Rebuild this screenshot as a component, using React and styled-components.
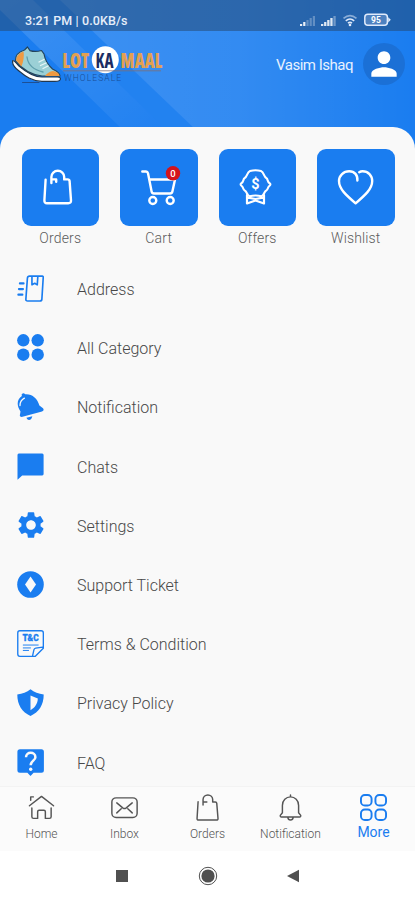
import React from 'react';
import styled, { createGlobalStyle } from 'styled-components';
import { MdSettings, MdPerson } from 'react-icons/md';

const BLUE = '#1a7df0';

const GlobalStyle = createGlobalStyle`
  * {
    box-sizing: border-box;
  }
  body {
    margin: 0;
    background: #fff;
    font-family: Roboto, "Noto Sans", sans-serif;
  }
`;

const Screen = styled.div`
  position: relative;
  width: 415px;
  height: 900px;
  display: flex;
  flex-direction: column;
  overflow: hidden;
  background: ${BLUE};
`;

const Rays = styled.svg`
  position: absolute;
  top: 0;
  left: 0;
`;

const StatusBar = styled.div`
  position: relative;
  height: 31px;
  flex: none;
  display: flex;
  align-items: center;
  justify-content: space-between;
  padding: 9px 24px 0 25px;
  background: rgba(38, 70, 110, 0.52);
  color: #e6eefa;
`;

const Clock = styled.span`
  font-size: 12.5px;
  font-weight: 500;
  letter-spacing: 0.1px;
  white-space: nowrap;
`;

const Header = styled.header`
  position: relative;
  height: 96px;
  flex: none;
  display: flex;
  align-items: flex-start;
  justify-content: space-between;
  padding: 12px 10px 0 12px;
`;

const Logo = styled.svg`
  display: block;
`;

const User = styled.div`
  display: flex;
  align-items: center;
  gap: 10px;
  color: #e8f1fe;
  font-size: 15px;
  white-space: nowrap;
`;

const UserName = styled.span`
  letter-spacing: -0.5px;
  padding-top: 2px;
`;

const Avatar = styled.div`
  width: 42px;
  height: 42px;
  border-radius: 50%;
  background: #1b70d6;
  display: flex;
  align-items: center;
  justify-content: center;
  color: #fff;
`;

const Panel = styled.main`
  position: relative;
  flex: 1;
  min-height: 0;
  overflow: hidden;
  padding: 22px 20.5px 0 21.5px;
  border-radius: 22px 22px 0 0;
  background: #f9f9f9;
`;

const Shortcuts = styled.div`
  display: flex;
  justify-content: space-between;
`;

const Shortcut = styled.div`
  width: 77.5px;
  display: flex;
  flex-direction: column;
  align-items: center;
  gap: 3px;
  color: #5c5c5c;
  font-size: 14px;
  font-weight: 300;
  line-height: 18px;
  letter-spacing: 0.15px;
`;

const Tile = styled.div`
  width: 77.5px;
  height: 77px;
  border-radius: 9px;
  background: ${BLUE};
  display: flex;
  align-items: center;
  justify-content: center;
`;

const Menu = styled.ul`
  list-style: none;
  margin: 12px -4.5px 0;
  padding: 0;
`;

const MenuItem = styled.li`
  height: 59.2px;
  display: flex;
  align-items: center;
  gap: 33px;
  color: #484848;
  font-size: 16px;
  font-weight: 300;
`;

const MenuLabel = styled.span`
  padding-top: 2px;
`;

const MenuIcon = styled.span`
  width: 27px;
  height: 27px;
  flex: none;
  display: flex;
  align-items: center;
  justify-content: center;
  color: ${BLUE};
`;

const TabBar = styled.nav`
  position: relative;
  height: 65px;
  flex: none;
  display: grid;
  grid-template-columns: repeat(5, 1fr);
  background: #fbfbfb;
  border-top: 1px solid #f3f3f3;
`;

const Tab = styled.div`
  display: flex;
  flex-direction: column;
  align-items: center;
  gap: ${({ $active }) => ($active ? 3 : 5)}px;
  padding-top: 7px;
  color: ${({ $active }) => ($active ? BLUE : '#555')};
  font-size: ${({ $active }) => ($active ? 14 : 12)}px;
  line-height: 17px;
  font-weight: ${({ $active }) => ($active ? 400 : 300)};
`;

const SystemBar = styled.div`
  height: 49px;
  flex: none;
  display: flex;
  align-items: center;
  justify-content: center;
  background: #fff;
`;

const Line = ({ size = 27, width = 1.5, box = 28, children }) => (
  <svg
    width={size}
    height={size}
    viewBox={`0 0 ${box} ${box}`}
    fill="none"
    stroke="currentColor"
    strokeWidth={width}
    strokeLinecap="round"
    strokeLinejoin="round"
  >
    {children}
  </svg>
);

const TileIcon = ({ children }) => (
  <svg
    width="77"
    height="77"
    viewBox="0 0 77 77"
    fill="none"
    stroke="#fff"
    strokeWidth="2.4"
    strokeLinecap="round"
    strokeLinejoin="round"
  >
    {children}
  </svg>
);

const shortcuts = [
  {
    label: 'Orders',
    icon: (
      <path d="M23.6 30.8 L22.4 51.3 Q22.2 54.3 25 54.3 H46.3 Q49.2 54.3 49 51.3 L47.6 32.2 Q47.4 30.4 45.6 30.4 H42.2 V28 A6.4 6.2 0 0 0 29.4 28 V34 M29.4 30.4 H34.2 V32.8" />
    ),
  },
  {
    label: 'Cart',
    icon: (
      <>
        <path d="M22.3 22.5 H26 Q27.6 22.5 28 24.2 L31.6 42.4 Q32 44.5 34 44.5 H50 Q52 44.5 52.4 42.5 L55 30.5 H29.4" />
        <circle cx="32.8" cy="51.5" r="3.5" />
        <circle cx="50.2" cy="51.5" r="3.5" />
        <circle cx="53" cy="24.3" r="7.2" fill="#d4141b" stroke="none" />
        <text x="53" y="27.6" textAnchor="middle" fontSize="9.5" fontWeight="500" fill="#fff" stroke="none">0</text>
      </>
    ),
  },
  {
    label: 'Offers',
    icon: (
      <>
        <path d="M28 46 V54.5 L36.5 51.5 L45 54.5 V46 M29 48.6 L36.5 50 L44 48.6" strokeWidth="2.2" />
        <path
          fill={BLUE}
          strokeWidth="2.1"
          d="M31 22 Q36.5 20.6 42 22 C45 23 44.6 27.4 47.4 29.2 C49.4 30.6 47.6 32.2 51 34.6 C51.6 35.2 51.4 36 50.8 36.5 C48 38.6 49.6 40 47.4 41.4 C44.6 43 45.2 46.6 42.4 47.2 Q36.5 45.8 30.6 47.2 C27.8 46.6 28.4 43 25.6 41.4 C23.4 40 25 38.6 22.2 36.5 C21.6 36 21.4 35.2 22 34.6 C25.4 32.2 23.6 30.6 25.6 29.2 C28.4 27.4 28 23 31 22 Z"
        />
        <text x="36.5" y="39.8" textAnchor="middle" fontSize="14.5" fontWeight="700" fill="#fff" stroke="none">$</text>
      </>
    ),
  },
  {
    label: 'Wishlist',
    icon: (
      <path d="M40.4 31.5 C40.8 26 37.6 22.3 32.2 22.3 C26.6 22.3 22 26.5 22 32 C22 40 29.2 46.2 38.6 54.3 C48 46.2 55.2 40 55.2 32 C55.2 26.5 51.2 22.3 45.6 22.3 Q43.6 22.3 42.2 23.2" />
    ),
  },
];

const menu = [
  {
    label: 'Address',
    icon: (
      <Line width={1.7}>
        <path d="M13 1.2 H26.2 Q27.3 1.2 27.2 2.6 L25.8 25 Q25.7 27 23.8 27 H11 Q9 27 9.2 25 L10.8 3.2 Q11 1.2 13 1.2 Z M15.5 1.5 V10.2 L18.4 8.6 L21 10.2 L21.6 1.5" />
        <path d="M3 8.7 H6.8 M2 14.6 H6.2 M1.4 20.4 H5.6" strokeWidth="2.2" />
      </Line>
    ),
  },
  {
    label: 'All Category',
    icon: (
      <svg width="27" height="27" viewBox="0 0 27 27" fill="currentColor">
        <circle cx="6.3" cy="6.3" r="6.2" />
        <circle cx="20.7" cy="6.3" r="6.2" />
        <circle cx="6.3" cy="20.7" r="6.2" />
        <circle cx="20.7" cy="20.7" r="6.2" />
      </svg>
    ),
  },
  {
    label: 'Notification',
    icon: (
      <svg width="27" height="27" viewBox="0 0 27 27" fill="currentColor">
        <path d="M4.6 1.4 Q6.4 -0.6 8.2 1.2 C15 .6 20.6 5.4 22.4 12.6 L26 15.2 Q27.6 17.6 25 18.4 L4.6 24 Q2.2 24 3 21.4 L3.5 18.4 C-1 12 .2 6 4.9 3 Z" />
        <path d="M9.4 24.8 L15.3 23.2 Q14.6 27 11.8 26.9 Q10 26.7 9.4 24.8 Z" />
        <path d="M3 12.5 Q3 7.5 7.4 5.2" fill="none" stroke="#f9f9f9" strokeWidth="1.3" strokeLinecap="round" />
      </svg>
    ),
  },
  {
    label: 'Chats',
    icon: (
      <svg width="27" height="27" viewBox="0 0 27 27" fill="currentColor">
        <path d="M1.8 .5 H25.2 Q26.6 .5 26.6 2 V21 Q26.6 22.4 25.2 22.4 H5.2 L.5 26.8 V2 Q.5 .5 1.8 .5 Z" />
      </svg>
    ),
  },
  { label: 'Settings', icon: <MdSettings size={32} style={{ flex: 'none' }} /> },
  {
    label: 'Support Ticket',
    icon: (
      <svg width="27" height="27" viewBox="0 0 27 27">
        <circle cx="13.5" cy="13.5" r="13.3" fill="currentColor" />
        <path d="M13.5 5.6 L19 13.5 L13.5 21.4 L8 13.5 Z" fill="#f9f9f9" />
      </svg>
    ),
  },
  {
    label: 'Terms & Condition',
    icon: (
      <Line width={1.4}>
        <path d="M3 .8 H25 Q27.3 .8 27.3 3 V19 L19 27.3 H3 Q.8 27.3 .8 25 V3 Q.8 .8 3 .8 Z M16.2 26.6 L17.6 20.4 Q18 19 19.4 18.8 L26.6 17.8" />
        <path d="M6.5 15.6 H22 M6.5 18.6 H14 M6.5 21.2 H12" strokeWidth="1" />
        <text x="14" y="11.4" textAnchor="middle" fontSize="8.6" fontWeight="900" fill="currentColor" strokeWidth=".3">T&amp;C</text>
      </Line>
    ),
  },
  {
    label: 'Privacy Policy',
    icon: (
      <svg width="27" height="27" viewBox="0 0 27 27">
        <path d="M13.5 .3 Q19 4.6 26.7 5.5 C26.7 16 22 23 13.5 26.9 C5 23 .3 16 .3 5.5 Q8 4.6 13.5 .3 Z" fill="currentColor" />
        <path d="M13.5 6.4 L20.8 9.6 C20.6 15 18 18.6 13.5 21.2 Z" fill="#f9f9f9" />
      </svg>
    ),
  },
  {
    label: 'FAQ',
    icon: (
      <svg width="27" height="27" viewBox="0 0 27 27">
        <path d="M3 .3 H24.4 Q26.9 .3 26.9 2.8 V21.3 Q26.9 23.8 24.4 23.8 H16.6 L13.5 26.9 L10.4 23.8 H3 Q.4 23.8 .4 21.3 V2.8 Q.4 .3 3 .3 Z" fill="currentColor" />
        <path d="M9 8.3 C9 2.2 18.4 2.4 18.4 8.2 C18.4 11.5 13.7 12 13.7 16.2" fill="none" stroke="#f9f9f9" strokeWidth="2.5" />
        <circle cx="13.7" cy="20.2" r="1.7" fill="#f9f9f9" />
      </svg>
    ),
  },
];

const tabs = [
  {
    label: 'Home',
    icon: (
      <Line>
        <path d="M1.5 12.2 L14 2.5 L26.5 12.2 M2.8 6.4 V3 H5.6 M4 14.4 V23.5 Q4 25.3 5.8 25.3 H10 V18.4 Q10 16.8 11.5 16.8 H16.5 Q18 16.8 18 18.4 V25.3 H22.2 Q24 25.3 24 23.5 V14.4" />
      </Line>
    ),
  },
  {
    label: 'Inbox',
    icon: (
      <Line>
        <rect x=".9" y="4" width="26.2" height="20.4" rx="4.4" />
        <path d="M6 9.2 L12.5 14.6 Q14 15.7 15.5 14.6 L22 9.2 M6 19.6 L10.6 15.3 M22 19.6 L17.4 15.3" />
      </Line>
    ),
  },
  {
    label: 'Orders',
    icon: (
      <Line box={37} width={2}>
        <path d="M5.6 10.6 L4.2 33.5 Q4.1 35.7 6.3 35.7 H30.8 Q33 35.7 32.9 33.5 L31.2 12.8 Q31 11 29.2 11 H25.6 V7.5 A6.6 6.2 0 0 0 12.4 7.5 V15 M12.4 11 H17.6" />
      </Line>
    ),
  },
  {
    label: 'Notification',
    icon: (
      <Line>
        <path d="M14 3 V1 M5.6 19.5 V11.8 C5.6 6.4 9.4 3 14 3 C18.6 3 22.4 6.4 22.4 11.8 V19.5 L24.6 22.2 Q24.8 23.8 23.4 23.8 H4.6 Q3.2 23.8 3.4 22.2 Z M11.2 24.2 Q11.6 27 14 27 Q16.4 27 16.8 24.2" />
      </Line>
    ),
  },
  {
    label: 'More',
    active: true,
    icon: (
      <Line width={2}>
        <rect x="1" y="1" width="11" height="11" rx="4" />
        <rect x="16" y="1" width="11" height="11" rx="4" />
        <rect x="1" y="16" width="11" height="11" rx="4" />
        <rect x="16" y="16" width="11" height="11" rx="4" />
      </Line>
    ),
  },
];

const StatusIcons = () => (
  <svg width="92" height="14" viewBox="0 0 92 14">
    {[0, 1, 2, 3, 4].map((i) => (
      <rect key={i} x={1 + i * 3.2} y={11 - i * 2} width="2.2" height={2 + i * 2} fill="#fff" opacity={i < 2 ? 0.9 : 0.28} />
    ))}
    {[0, 1, 2, 3, 4].map((i) => (
      <rect key={i} x={22 + i * 3.1} y={11 - i * 2} width="2.3" height={2 + i * 2} fill="#fff" opacity={i < 4 ? 0.85 : 0.35} />
    ))}
    <g fill="none" stroke="#dfeafb" strokeWidth="1.6">
      <path d="M44.5 5.3 Q51 -.2 57.5 5.3" opacity=".55" />
      <path d="M46.8 7.8 Q51 4.2 55.2 7.8" />
      <path d="M49 10.2 Q51 8.5 53 10.2" />
    </g>
    <circle cx="51" cy="12" r="1.3" fill="#dfeafb" />
    <rect x="65.8" y="1.3" width="22.6" height="11" rx="3" fill="#8fb1de" fillOpacity=".4" stroke="#dfeafb" strokeWidth="1.5" />
    <path d="M89.2 4.2 L91.8 6.8 L89.2 9.4 Z" fill="#dfeafb" />
    <text x="77" y="10" textAnchor="middle" fontSize="8.5" fontWeight="700" fill="#fff">95</text>
  </svg>
);

const Shoe = () => (
  <g strokeLinejoin="round" strokeLinecap="round">
    <path d="M.8 17.5 C3 17.5 4 20 7 23 C14 29 22 34 30 34 H44 Q48.5 33.5 48.5 36 Q48 38.4 43 38.4 H30 C20 38.4 13 33 7 28 Q-.6 22 .8 17.5 Z" fill="#fff" stroke="#22384f" strokeWidth="1.2" />
    <path d="M3.5 18 C3 12 6 9 12.5 7 L15.5 4 L18 7.6 C22 9 26 8.5 29.5 7.5 L32 11 C33 17 36 22 40.5 26 C44 28 47.5 29 48 33 H30 C19 32 10 26 3.5 18 Z" fill="#9bd0d6" stroke="#24445c" strokeWidth="1.2" />
    <path d="M4.3 17.6 C4 13 7 9.8 11.6 8.4 Q12.6 16 9.4 23.4 Z" fill="#ef9a41" />
    <path d="M33 33 Q36 28.8 41 28 Q47 29 47.6 33 Z" fill="#ef9a41" />
    <path d="M27 19 L32 16.5 M28.5 22.5 L34 20 M31 25.5 L36 23" stroke="#e9f6f7" strokeWidth="1.3" />
    <path d="M15 14 C16 22 22 27 31 29" fill="none" stroke="#5f9fac" strokeWidth="1.3" />
    <path d="M10.5 39.5 H27" stroke="#1d4f94" strokeWidth="1" />
  </g>
);

const App = () => {
  return (
    <>
      <GlobalStyle />
      <Screen>
        <Rays width="415" height="150" viewBox="0 0 415 150">
          <defs>
            <linearGradient id="glow" x1="0" x2="1">
              <stop offset="0" stopColor="#fff" stopOpacity=".15" />
              <stop offset=".5" stopColor="#fff" stopOpacity=".11" />
              <stop offset="1" stopColor="#fff" stopOpacity="0" />
            </linearGradient>
            <linearGradient id="streak" x1="0" y1="0" x2="1" y2="1">
              <stop offset="0" stopColor="#fff" stopOpacity=".15" />
              <stop offset="1" stopColor="#fff" stopOpacity=".03" />
            </linearGradient>
          </defs>
          <path d="M60 0 L196 130 H415 V0 Z" fill="url(#glow)" />
          <path d="M0 10 V0 H33 L166 130 H123 Z" fill="url(#streak)" />
          <path d="M33 0 H60 L196 130 H166 Z" fill="#fff" opacity=".04" />
        </Rays>
        <StatusBar>
          <Clock>3:21 PM | 0.0KB/s</Clock>
          <StatusIcons />
        </StatusBar>
        <Header>
          <Logo width="160" height="44" viewBox="0 0 160 44">
            <Shoe />
            <circle cx="93.3" cy="16.8" r="13.5" fill="#fff" />
            <g fontFamily="'Open Sans', sans-serif" fontWeight="800" fontSize="20.5" style={{ fontStretch: '75%' }}>
              <text transform="translate(50.3 25.3) scale(.87 1)" fill="#e2a052">LOT</text>
              <text transform="translate(108.6 25.3) scale(.85 1)" fill="#e2a052">MAAL</text>
              <text transform="translate(83.6 25) scale(.84 1)" fontWeight="700" fill="#1b2c62">KA</text>
            </g>
            <path d="M51 27.8 H149" stroke="#806f75" strokeWidth=".8" />
            <text x="52" y="37.8" fontSize="8.5" fontWeight="300" letterSpacing="1.1" fill="#1b4e96">WHOLESALE</text>
          </Logo>
          <User>
            <UserName>Vasim Ishaq</UserName>
            <Avatar>
              <MdPerson size={38} />
            </Avatar>
          </User>
        </Header>
        <Panel>
          <Shortcuts>
            {shortcuts.map((item) => (
              <Shortcut key={item.label}>
                <Tile>
                  <TileIcon>{item.icon}</TileIcon>
                </Tile>
                {item.label}
              </Shortcut>
            ))}
          </Shortcuts>
          <Menu>
            {menu.map((item) => (
              <MenuItem key={item.label}>
                <MenuIcon>{item.icon}</MenuIcon>
                <MenuLabel>{item.label}</MenuLabel>
              </MenuItem>
            ))}
          </Menu>
        </Panel>
        <TabBar>
          {tabs.map((tab) => (
            <Tab key={tab.label} $active={tab.active}>
              {tab.icon}
              {tab.label}
            </Tab>
          ))}
        </TabBar>
        <SystemBar>
          <svg width="190" height="20" viewBox="0 0 190 20" fill="#505050">
            <rect x="3" y="4" width="12" height="12" />
            <circle cx="95" cy="10" r="6.6" />
            <circle cx="95" cy="10" r="8.7" fill="none" stroke="#505050" strokeWidth="1" />
            <path d="M174 10 L186 3.7 V16.3 Z" />
          </svg>
        </SystemBar>
      </Screen>
    </>
  );
};

export default App;
